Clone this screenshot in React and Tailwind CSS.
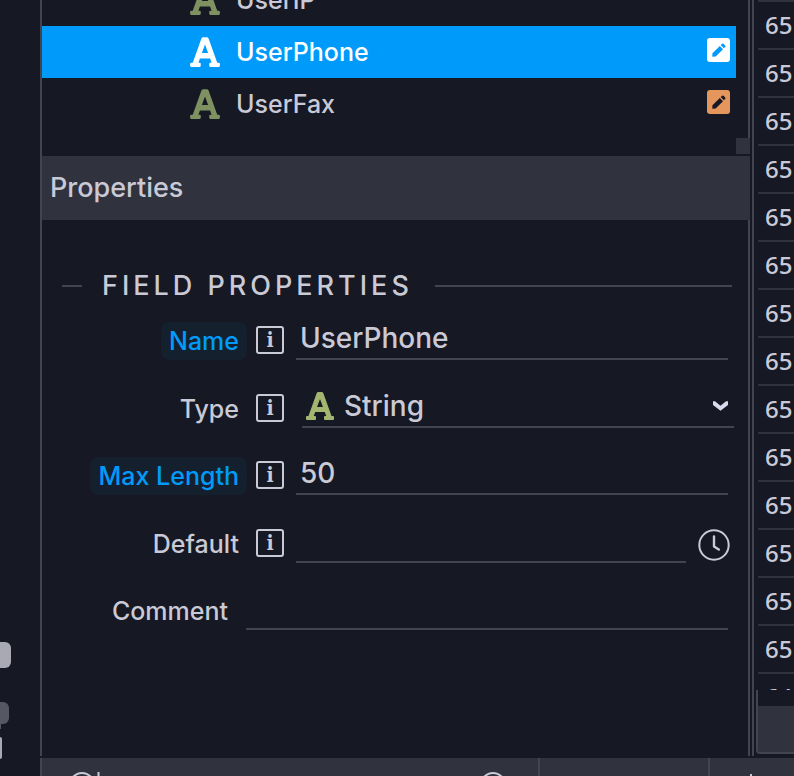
import React, { useState } from "react";
import { FaFont } from "react-icons/fa";

const fields = ["UserIP", "UserPhone", "UserFax"];

const cells = [
    "65", "65", "65", "65", "65", "65", "65",
    "65", "65", "65", "65", "65", "65", "65", "64",
];

function PencilIcon() {
    return (
        <svg viewBox="0 0 14 14" className="size-3.5" fill="currentColor">
            <path d="M0.3 13.7 L0.5 10.3 L7.8 3 L11 6.2 L3.7 13.5 Z" />
            <path d="M8.7 2.1 L10.1 0.8 Q10.8 0.2 11.5 0.8 L13.2 2.5 Q13.8 3.2 13.2 3.9 L11.9 5.3 Z" />
        </svg>
    );
}

function TreeRow({ name, selected, edited, onSelect }) {
    return (
        <li>
            <button
                type="button"
                onClick={onSelect}
                className={
                    "flex h-[52px] w-full items-center gap-4 pl-[148px] pr-1.5 text-left " +
                    (selected ? "bg-[#009bfa] text-white" : "text-[#c9cad6]")
                }
            >
                <FaFont
                    className={
                        "h-[34px] w-[30px] shrink-0 " +
                        (selected ? "text-white" : "text-[#7f9160]")
                    }
                />
                <span className="flex-1 pt-0.5 text-[25px]">{name}</span>
                {edited && (
                    <span
                        className={
                            "mb-1 flex h-6 w-[23px] items-center justify-center rounded-[3px] " +
                            (selected
                                ? "bg-white text-[#009bfa]"
                                : "bg-[#e5965c] text-[#161823]")
                        }
                    >
                        <PencilIcon />
                    </span>
                )}
            </button>
        </li>
    );
}

function InfoButton({ label }) {
    return (
        <button
            type="button"
            aria-label={label}
            className="mb-1.5 ml-[9px] flex size-7 shrink-0 items-center justify-center rounded-[3px] border-2 border-[#c9cad6] font-['DejaVu_Serif_Condensed','DejaVu_Serif',serif] text-[21px] leading-6 font-bold text-[#c9cad6]"
        >
            i
        </button>
    );
}

function Label({ htmlFor, children, required }) {
    return (
        <div className="flex w-[205px] shrink-0 justify-end">
            <label
                htmlFor={htmlFor}
                className={
                    "rounded-lg px-2 text-[25px] leading-[38px] " +
                    (required ? "bg-[#15202e] text-[#009bfa]" : "")
                }
            >
                {children}
            </label>
        </div>
    );
}

const inputClass =
    "h-11 min-w-0 flex-1 border-b-2 border-[#424450] bg-transparent px-1 pt-0.5 text-[28px] outline-none";

function PropertiesForm() {
    const [name, setName] = useState("UserPhone");
    const [length, setLength] = useState("50");

    return (
        <form className="flex-1 border-r-2 border-[#424450] pt-[46px]">
            <h2 className="flex items-center pl-5 pr-4 text-[27px] leading-10 font-medium tracking-[4px]">
                <span className="mr-5 h-0.5 w-5 bg-[#424450]" />
                FIELD PROPERTIES
                <span className="ml-[22px] h-0.5 flex-1 bg-[#424450]" />
            </h2>

            <div className="flex h-[54px] items-end pr-5">
                <Label htmlFor="name" required>Name</Label>
                <InfoButton label="About name" />
                <input
                    id="name"
                    value={name}
                    onChange={(e) => setName(e.target.value)}
                    className={"ml-3 " + inputClass}
                />
            </div>

            <div className="flex h-[68px] items-end pr-3.5">
                <Label htmlFor="type">Type</Label>
                <InfoButton label="About type" />
                <div className="ml-[18px] flex h-11 flex-1 items-center border-b-2 border-[#424450] pl-1 pr-1.5 pt-0.5">
                    <FaFont className="h-8 w-7 shrink-0 text-[#a3b56f]" />
                    <select
                        id="type"
                        className="ml-2.5 flex-1 appearance-none bg-transparent text-[28px] outline-none"
                    >
                        <option>String</option>
                    </select>
                    <svg viewBox="0 0 15 10" className="h-2.5 w-[15px]" fill="#d9daee">
                        <path d="M0 0.3 L2 0.3 L7.5 4.8 L13 0.3 L15 0.3 L15 4 L7.5 9.8 L0 4 Z" />
                    </svg>
                </div>
            </div>

            <div className="flex h-[67px] items-end pr-5">
                <Label htmlFor="length" required>Max Length</Label>
                <InfoButton label="About max length" />
                <input
                    id="length"
                    value={length}
                    onChange={(e) => setLength(e.target.value)}
                    className={"ml-3 " + inputClass}
                />
            </div>

            <div className="flex h-[68px] items-end pr-[18px]">
                <Label htmlFor="default">Default</Label>
                <InfoButton label="About default" />
                <input id="default" className={"ml-3 " + inputClass} />
                <button type="button" aria-label="History" className="ml-3 mb-0.5">
                    <svg
                        viewBox="0 0 32 32"
                        className="size-8"
                        fill="none"
                        stroke="#c9cad6"
                        strokeLinecap="round"
                        strokeLinejoin="round"
                    >
                        <circle cx="16" cy="16" r="14.7" strokeWidth="2" />
                        <path d="M16 7.5V17.5L20.8 20.5" strokeWidth="2.4" />
                    </svg>
                </button>
            </div>

            <div className="flex h-[67px] items-end pr-5">
                <label htmlFor="comment" className="w-[186px] text-right text-[25px] leading-[38px]">
                    Comment
                </label>
                <input id="comment" className={"ml-[18px] " + inputClass} />
            </div>
        </form>
    );
}

function DataColumn() {
    return (
        <div className="ml-0.5 flex w-[42px] shrink-0 flex-col">
            <div className="flex min-h-0 flex-1 border-l-2 border-[#424450]">
                <div className="flex flex-1 flex-col pb-0.5 pl-0.5">
                    <div className="min-h-0 flex-1 overflow-hidden pl-0.5">
                        <table className="w-full font-['Noto_Sans',sans-serif] text-[24px] leading-[45px]">
                            <tbody>
                                {cells.map((cell, i) => (
                                    <tr key={i} className="h-12 border-t-2 border-[#30323e] align-top">
                                        <td className="p-0 pl-[7px]">{cell}</td>
                                    </tr>
                                ))}
                            </tbody>
                        </table>
                    </div>
                    <div className="h-16 rounded-bl-sm border-b-2 border-l-2 border-[#424450] pt-4">
                        <div className="h-full bg-[#30323e]" />
                    </div>
                </div>
            </div>
            <div className="h-0.5" />
        </div>
    );
}

function StatusBar() {
    return (
        <div className="flex h-[18px] shrink-0 overflow-hidden border-l-2 border-[#424450] bg-[#30323e]">
            <div className="flex flex-1 items-start justify-between pl-7 pr-8 pt-3.5">
                <svg viewBox="0 0 36 26" className="h-[26px] w-9" fill="none" stroke="#c9cad6" strokeWidth="2">
                    <circle cx="12" cy="13" r="12" />
                    <path d="M28.5 0V26" />
                </svg>
                <svg viewBox="0 0 26 26" className="size-[26px]" fill="none" stroke="#c9cad6" strokeWidth="2">
                    <circle cx="13" cy="13" r="12" />
                </svg>
            </div>
            <div className="w-[170px] border-l-2 border-[#424450]" />
            <div className="w-[86px] border-l-2 border-[#424450] pl-10 pt-4">
                <div className="h-4 w-0.5 bg-[#c9cad6]" />
            </div>
        </div>
    );
}

function App() {
    const [selected, setSelected] = useState("UserPhone");

    return (
        <div className="flex h-screen overflow-hidden bg-[#161823] font-[Inter,sans-serif] font-medium text-[#c9cad6]">
            <aside className="flex w-10 shrink-0 flex-col justify-end pb-[17px]">
                <div className="h-[26px] w-[11px] rounded-r-md bg-[#a8a9b3]" />
                <div className="mt-[34px] h-[22px] w-[9px] rounded-r-md bg-[#555763]" />
                <div className="h-[5px] w-px bg-[#555763]" />
                <div className="mt-2 h-[22px] w-0.5 rounded-r-xs bg-[#a8a9b3]" />
            </aside>

            <div className="flex min-w-0 flex-1 flex-col">
                <main className="flex min-h-0 flex-1">
                    <section className="flex min-w-0 flex-1 flex-col border-l-2 border-[#424450] mb-0.5">
                        <div className="flex h-[156px] shrink-0 pb-0.5">
                            <ul className="flex min-w-0 flex-1 flex-col justify-end overflow-hidden pb-6">
                                {fields.map((field) => (
                                    <TreeRow
                                        key={field}
                                        name={field}
                                        edited={field !== "UserIP"}
                                        selected={field === selected}
                                        onSelect={() => setSelected(field)}
                                    />
                                ))}
                            </ul>
                            <div className="flex w-3.5 flex-col">
                                <div className="flex-1 border-r-2 border-[#424450]" />
                                <div className="h-4 bg-[#30323e]" />
                            </div>
                        </div>

                        <h1 className="h-16 shrink-0 bg-[#30323e] pl-2 text-[27px] leading-[64px] font-medium">
                            Properties
                        </h1>

                        <PropertiesForm />
                    </section>

                    <DataColumn />
                </main>

                <StatusBar />
            </div>
        </div>
    );
}

export default App;
